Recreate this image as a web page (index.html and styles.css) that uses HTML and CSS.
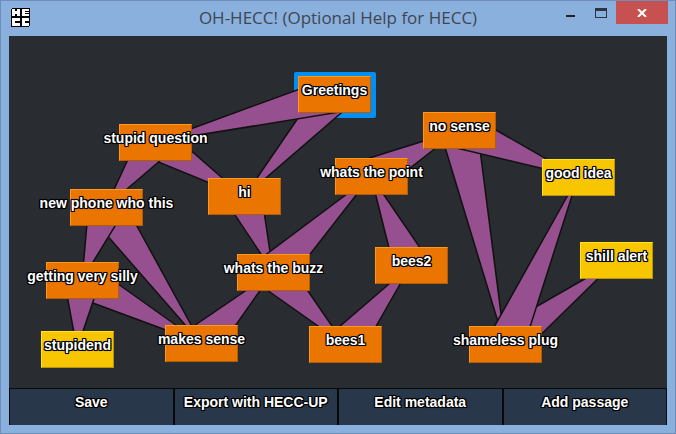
FILE: index.html
```html
<!DOCTYPE html>
<html lang="en">
<head>
<meta charset="utf-8">
<title>OH-HECC! (Optional Help for HECC)</title>
<link rel="stylesheet" href="styles.css">
</head>
<body>
<div class="window">
  <header class="titlebar">
    <svg class="logo" width="19" height="19" viewBox="0 0 19 19" shape-rendering="crispEdges" aria-hidden="true">
      <rect width="19" height="19" rx="2" fill="#000"/>
      <g fill="#fff">
        <rect x="1" y="1" width="8" height="7"/>
        <rect x="11" y="1" width="7" height="7"/>
        <rect x="1" y="10" width="8" height="8"/>
        <rect x="11" y="10" width="7" height="8"/>
      </g>
      <g fill="#000">
        <rect x="4" y="1" width="2" height="2"/>
        <rect x="4" y="6" width="2" height="2"/>
        <rect x="14" y="3" width="4" height="1"/>
        <rect x="14" y="5" width="4" height="1"/>
        <rect x="4" y="13" width="5" height="2"/>
        <rect x="14" y="13" width="4" height="2"/>
      </g>
    </svg>
    <h1 class="title">OH-HECC! (Optional Help for HECC)</h1>
    <div class="controls">
      <button class="control" type="button" aria-label="Minimize"><svg width="12" height="10" viewBox="0 0 12 10"><path d="M1 7H10V9H1Z" fill="#222"/></svg></button>
      <button class="control" type="button" aria-label="Maximize"><svg width="12" height="10" viewBox="0 0 12 10"><path d="M0 0H12V10H0ZM1 3V9H11V3Z" fill="#2d353f" fill-rule="evenodd"/></svg></button>
      <button class="control control-close" type="button" aria-label="Close"><svg width="10" height="8" viewBox="0 0 10 8"><path d="M1 0L9 8M9 0L1 8" stroke="#fff" stroke-width="2"/></svg></button>
    </div>
  </header>
  <main class="canvas">
    <div class="node-halo" style="left:285px;top:36px"></div>
    <svg class="links" width="658" height="352" viewBox="9 36 658 352" aria-hidden="true">
      <polygon points="348,107 322,83 244,197"/>
      <polygon points="340,112 330,78 155,142"/>
      <polygon points="146,157 164,127 244,197"/>
      <polygon points="169,153 141,131 106,207"/>
      <polygon points="121,197 91,217 201,343"/>
      <polygon points="123,213 89,201 82,280"/>
      <polygon points="74,296 90,264 201,343"/>
      <polygon points="100,281 64,279 77,349"/>
      <polygon points="261,191 227,203 273,272"/>
      <polygon points="214,356 188,330 273,272"/>
      <polygon points="286,285 260,259 371,176"/>
      <polygon points="260,285 286,259 345,345"/>
      <polygon points="359,356 331,334 411,265"/>
      <polygon points="427,258 395,272 371,176"/>
      <polygon points="379,192 363,160 459,130"/>
      <polygon points="477,126 441,134 505,345"/>
      <polygon points="452,147 466,113 578,177"/>
      <polygon points="516,359 494,331 616,261"/>
      <polygon points="522,352 488,338 578,177"/>
    </svg>
    <button class="node" type="button" style="left:289px;top:40px">Greetings</button>
    <button class="node" type="button" style="left:110px;top:88px">stupid question</button>
    <button class="node" type="button" style="left:61px;top:153px">new phone who this</button>
    <button class="node" type="button" style="left:199px;top:142px">hi</button>
    <button class="node" type="button" style="left:326px;top:122px">whats the point</button>
    <button class="node" type="button" style="left:414px;top:76px">no sense</button>
    <button class="node node-end" type="button" style="left:533px;top:123px">good idea</button>
    <button class="node node-end" type="button" style="left:571px;top:206px">shill alert</button>
    <button class="node" type="button" style="left:37px;top:226px">getting very silly</button>
    <button class="node node-end" type="button" style="left:32px;top:295px">stupidend</button>
    <button class="node" type="button" style="left:228px;top:218px">whats the buzz</button>
    <button class="node" type="button" style="left:156px;top:289px">makes sense</button>
    <button class="node" type="button" style="left:300px;top:290px">bees1</button>
    <button class="node" type="button" style="left:366px;top:211px">bees2</button>
    <button class="node" type="button" style="left:460px;top:290px">shameless plug</button>
  </main>
  <footer class="toolbar">
    <button class="tool" type="button">Save</button>
    <button class="tool" type="button">Export with HECC-UP</button>
    <button class="tool" type="button">Edit metadata</button>
    <button class="tool" type="button">Add passage</button>
  </footer>
</div>
</body>
</html>
```
FILE: styles.css
```css
* {
  box-sizing: border-box;
}

body {
  margin: 0;
  font-family: "Liberation Sans", Arial, sans-serif;
}

button {
  margin: 0;
  padding: 0;
  border: 0;
  background: none;
  font: inherit;
}

.window {
  display: flex;
  flex-direction: column;
  min-height: 100vh;
  padding: 0 8px 8px;
  border: 1px solid #6f8db8;
  background: #8ab0de;
}

.titlebar {
  display: grid;
  grid-template-columns: 1fr auto 1fr;
  height: 35px;
}

.logo {
  margin: 7px 0 0 2px;
}

.title {
  margin: 0;
  color: #3f4650;
  font: 17px/34px "Open Sans", "Noto Sans", sans-serif;
  white-space: nowrap;
}

.controls {
  display: flex;
  justify-content: flex-end;
  align-items: flex-start;
  margin-right: -1px;
}

.control {
  display: flex;
  align-items: center;
  justify-content: center;
  width: 30px;
  height: 23px;
}

.control-close {
  width: 52px;
  background: #c75050;
}

.canvas {
  position: relative;
  flex: 1;
  overflow: hidden;
  background: #292c30;
}

.links {
  position: absolute;
  left: 0;
  top: 0;
  fill: #964f8f;
  stroke: #111;
  stroke-width: 1.5;
}

.node-halo {
  position: absolute;
  width: 82px;
  height: 46px;
  border-radius: 2px;
  background: #0090f5;
}

.node {
  position: absolute;
  display: flex;
  justify-content: center;
  width: 73px;
  height: 37px;
  padding-top: 5px;
  border: 1px solid;
  border-color: #ff9a18 #b35c08 #b35c08 #ff9a18;
  background: #ea7500;
}

.node-end {
  border-color: #ffe61c #b89408 #b89408 #ffe61c;
  background: #f7c600;
}

.node,
.tool {
  color: #fff;
  font-size: 14px;
  font-weight: bold;
  line-height: 16px;
  white-space: nowrap;
  text-shadow: 1px 0 #000, -1px 0 #000, 0 1px #000, 0 -1px #000,
    1px 1px #000, -1px 1px #000, 1px -1px #000, -1px -1px #000, 0 0 2px #000;
}

.toolbar {
  display: grid;
  grid-template-columns: repeat(4, 1fr);
  height: 37px;
}

.tool {
  display: flex;
  justify-content: center;
  padding-top: 5px;
  border: 1px solid #06080c;
  border-bottom: 0;
  background: #29374b;
}
```
